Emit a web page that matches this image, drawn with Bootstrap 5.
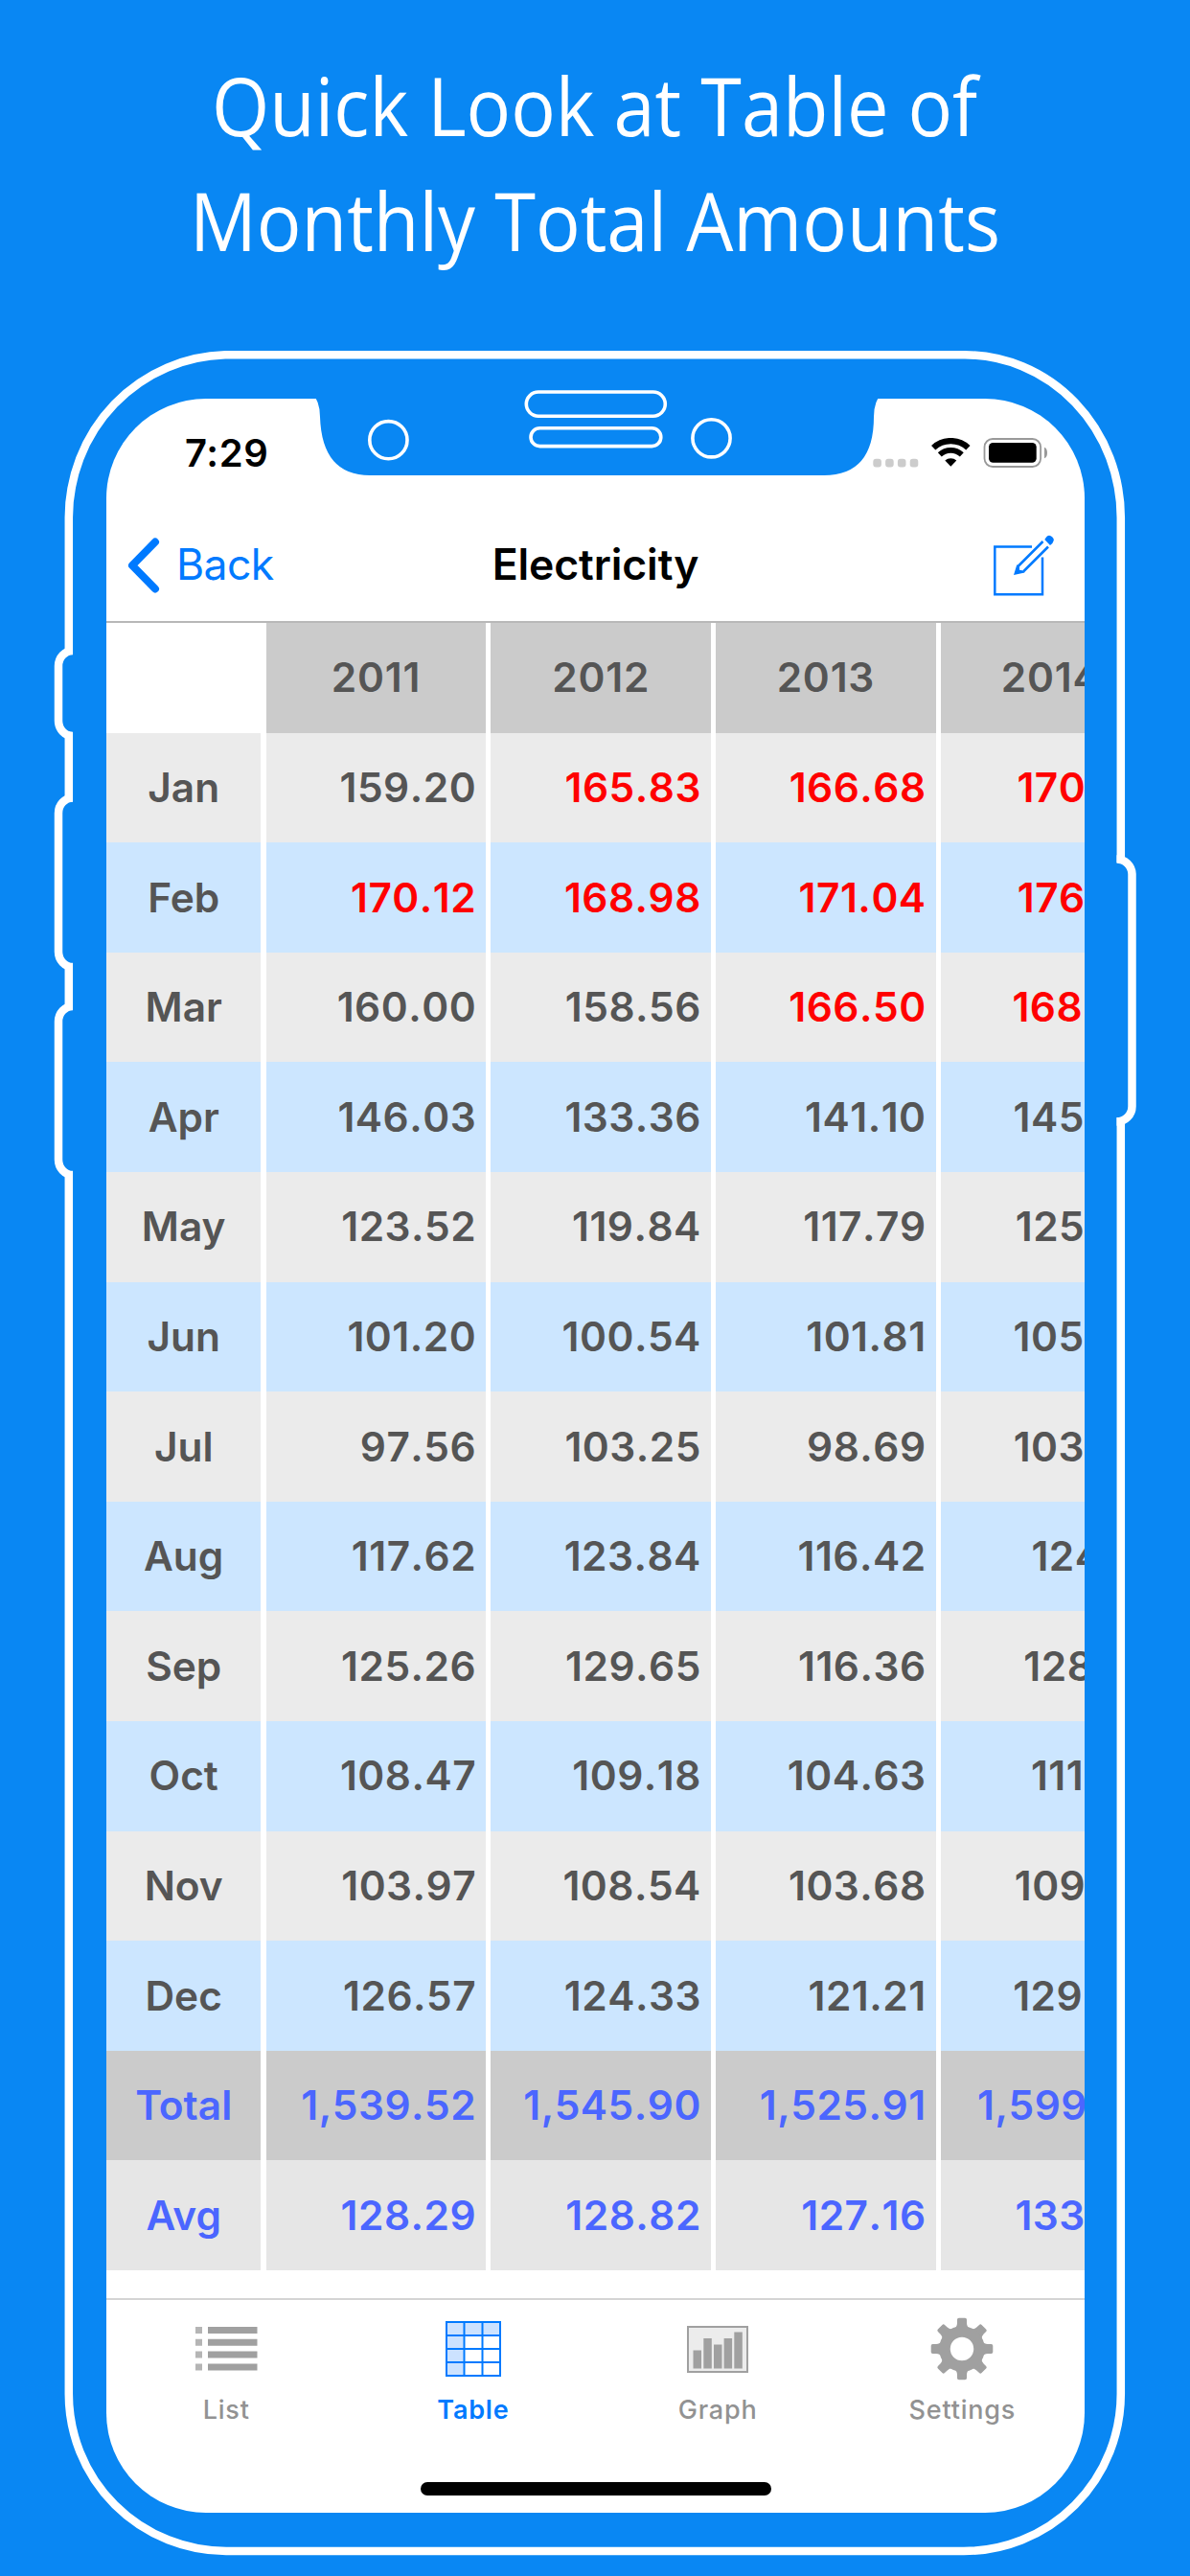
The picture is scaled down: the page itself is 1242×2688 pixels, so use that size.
<!DOCTYPE html>
<html lang="en">
<head>
    <meta charset="UTF-8">
    <meta name="viewport" content="width=device-width, initial-scale=1">
    <title>Electricity - Monthly Totals</title>
    <link href="https://cdn.jsdelivr.net/npm/bootstrap@5.3.3/dist/css/bootstrap.min.css" rel="stylesheet">
    <style>
        body { width: 1242px; height: 2688px; background: #0987f3; font-family: Inter, "Liberation Sans", sans-serif; overflow: hidden; }
        .headline { height: 416px; padding-top: 49px; font: 400 85px/120px "Open Sans", "Noto Sans", sans-serif; }
        .headline span { white-space: nowrap; transform-origin: center; }
        .phone-art { left: 0; top: 0; z-index: 2; pointer-events: none; }
        .screen { width: 1021px; height: 2206px; margin-left: 111px; border-radius: 104px; background: #fff; color: #000; }
        .status-bar { height: 120px; padding: 0 39px 0 82px; }
        .clock { font-size: 40px; font-weight: 600; line-height: 40px; padding-top: 37px; letter-spacing: .6px; }
        .status-icons { margin-top: 41px; }
        .nav-top { display: grid; grid-template-columns: 1fr auto 1fr; height: 114px; border-bottom: 2px solid #b8b8b8; padding: 0 31px 5px 21px; }
        .nav-top a { color: #007aff; font-size: 44.5px; line-height: 1; letter-spacing: -.6px; }
        .nav-top svg { overflow: visible; }
        .nav-title { font-size: 44.5px; font-weight: 600; line-height: 1; letter-spacing: -.1px; margin-left: 10px; }
        .amounts { display: grid; grid-template-columns: 161.4px repeat(4, 229.4px); grid-auto-rows: 114.6px; column-gap: 5.35px; height: 1748px; font-size: 42.4px; font-weight: 600; color: #555; }
        .amounts div { display: flex; align-items: center; justify-content: flex-end; padding-right: 10px; background: #ebebeb; white-space: nowrap; font-kerning: none; font-feature-settings: "calt" 0; letter-spacing: .5px; }
        .amounts .lbl { justify-content: center; padding: 0; font-kerning: auto; letter-spacing: 0; }
        .amounts .year { letter-spacing: .8px; }
        .amounts .even-month { background: #cce6ff; }
        .amounts .year, .amounts .total { background: #cbcbcb; }
        .amounts .avg { background: #e6e6e6; }
        .amounts .total, .amounts .avg { color: #4b66ff; }
        .amounts .corner { background: #fff; }
        .amounts .high { color: #f00; }
        .tabs { height: 192px; border-top: 2px solid #d4d4d4; }
        .tabs a { color: #929292; font-size: 27px; font-weight: 500; line-height: 32px; letter-spacing: .8px; }
        .tabs a:first-child { padding-right: 5px; }
        .tabs a.current { color: #007aff; font-weight: 600; }
        .tabs svg { height: 72px; margin: 15px 0 12px; }
        .home-bar { width: 366px; height: 14px; border-radius: 7px; background: #000; }
    </style>
</head>
<body class="position-relative">
<h1 class="headline m-0 text-white d-flex flex-column align-items-center">
    <span data-width="799">Quick Look at Table of</span>
    <span data-width="846">Monthly Total Amounts</span>
</h1>

<main class="screen overflow-hidden d-flex flex-column">
    <div class="status-bar d-flex justify-content-between align-items-start">
        <div class="clock">7:29</div>
        <svg class="status-icons" width="183" height="31" viewBox="0 0 183 31">
            <g fill="#ccc"><rect x="1.3" y="21.7" width="8.600" height="8.800" rx="3"/><rect x="14.1" y="21.7" width="8.600" height="8.800" rx="3"/><rect x="26.9" y="21.7" width="8.600" height="8.800" rx="3"/><rect x="39.7" y="21.7" width="8.600" height="8.800" rx="3"/></g>
            <path fill="none" stroke="#000" stroke-width="6.300" d="M64.200 10.200A26.600 26.600 0 0 1 100.400 10.200"/>
            <path fill="none" stroke="#000" stroke-width="5.700" d="M70.800 17.400A16.800 16.800 0 0 1 93.800 17.400"/>
            <path d="M82.300 29.700L76.300 23.500A9 9 0 0 1 88.300 23.500Z"/>
            <rect x="117.500" y="1" width="58.600" height="29" rx="8.500" fill="none" stroke="#999" stroke-width="1.800"/>
            <rect x="122" y="5" width="49.700" height="20.700" rx="4.500"/>
            <path d="M180 9.700Q183 11 183 15.500T180 21.300Z" fill="#999"/>
        </svg>
    </div>

    <nav class="nav-top align-items-center">
        <a href="#" class="d-flex align-items-center text-decoration-none">
            <svg width="36" height="60" viewBox="0 0 36 60" fill="none" stroke="#007aff" stroke-width="8" stroke-linecap="round" stroke-linejoin="round"><path d="M30 5.500L6 30L30 54.500"/></svg>
            <span class="ms-3">Back</span>
        </a>
        <span class="nav-title">Electricity</span>
        <a href="#" class="d-flex justify-content-end" aria-label="Edit">
            <svg width="66" height="66" viewBox="0 -1.500 66 66" fill="none" stroke="#007aff" stroke-width="2.500">
                <path d="M42 12H3.300V61.800H53V23"/>
                <path d="M53.500 6.500L27.500 32.500M59 12L33 38"/>
                <path fill="#007aff" stroke="none" d="M23 41.500L26.300 30.800L29 33V36.300L32 36.800L34.500 39Z"/>
                <path fill="#007aff" stroke="none" d="M55.300 4.500Q59 -2.500 63.200 1.800Q67.500 5.500 61 10.500Z"/>
            </svg>
        </a>
    </nav>

    <div class="amounts" id="amounts"></div>

    <nav class="tabs d-flex">
        <a href="#" class="d-flex flex-column align-items-center text-decoration-none w-25">
            <svg width="66" viewBox="0 0 66 72"><path fill="#b5b5b5" d="M1 13h7v7H1zM1 25.800h7v7H1zM1 38.600h7v7H1zM1 51.400h7v7H1z"/><path fill="#a0a0a0" d="M14 13h51.500v7H14zM14 25.800h51.500v7H14zM14 38.600h51.500v7H14zM14 51.400h51.500v7H14z"/></svg>
            <span>List</span>
        </a>
        <a href="#" class="current d-flex flex-column align-items-center text-decoration-none w-25">
            <svg width="60" viewBox="0 0 60 72"><path fill="#cce2ff" d="M2 8h56v14H20v42H2z"/><path fill="none" stroke="#007aff" stroke-width="2" d="M2 8h56v56H2zM20.500 8v56M39.500 8v56M2 22h56M2 36h56M2 50h56"/></svg>
            <span>Table</span>
        </a>
        <a href="#" class="d-flex flex-column align-items-center text-decoration-none w-25">
            <svg width="66" viewBox="0 0 66 72"><path fill="#ececec" stroke="#a0a0a0" stroke-width="2" d="M2 13h62v47H2z"/><path fill="#a0a0a0" d="M7.500 37.500h8.500v19H7.500zM18.300 25h8.500v31.500h-8.500zM29 31.500h8.500v25H29zM39.600 25h8.500v31.500h-8.500zM50.300 18.500h8.500v38h-8.500z"/></svg>
            <span>Graph</span>
        </a>
        <a href="#" class="d-flex flex-column align-items-center text-decoration-none w-25">
            <svg width="66" viewBox="-33 -36 66 72" fill="#a0a0a0"><g id="gear-teeth"></g><circle r="18" fill="none" stroke="#a0a0a0" stroke-width="11.500"/></svg>
            <span>Settings</span>
        </a>
    </nav>
    <div class="home-bar mx-auto"></div>
</main>

<!-- phone body: outline, side buttons, notch, speaker and cameras -->
<svg class="phone-art position-absolute" width="1242" height="2688" viewBox="0 0 1242 2688" fill="none">
    <path fill="#0987f3" d="M325 410Q334 418 334 435Q336 496 386 496H860Q912 496 912 435Q912 418 921 410Z"/>
    <g stroke="#fff" stroke-width="8.500">
        <path d="M71.800 683V540A168 170 0 0 1 235 370.300H1007A163 170 0 0 1 1169.800 540V900"/>
        <path d="M71.800 764V836.500M71.800 1005V1054M71.800 1222V2498A165 164 0 0 0 236 2662H1006A164 164 0 0 0 1169.800 2498V1166"/>
        <path d="M76 679A15 16 0 0 0 61 695V752A15 16 0 0 0 76 768M76 832.500A15 16 0 0 0 61 848.500V993A15 16 0 0 0 76 1009M76 1050A15 16 0 0 0 61 1066V1210A15 16 0 0 0 76 1226M1165.500 896.500A16 16 0 0 1 1181.500 912V1154.500A16 16 0 0 1 1165.500 1170.500"/>
    </g>
    <g stroke="#fff" stroke-width="3.600">
        <circle cx="405.400" cy="459.200" r="19.600"/>
        <circle cx="742.500" cy="457.300" r="19.600"/>
        <rect x="549.300" y="409" width="145" height="25.200" rx="12.600"/>
        <rect x="554" y="446.800" width="135.800" height="18.800" rx="9.400"/>
    </g>
</svg>

<script src="https://cdn.jsdelivr.net/npm/bootstrap@5.3.3/dist/js/bootstrap.bundle.min.js"></script>
<script>
// a trailing * marks amounts over the limit, shown in red
const rows = [
    ['', '2011', '2012', '2013', '2014'],
    ['Jan', '159.20', '165.83*', '166.68*', '170.52*'],
    ['Feb', '170.12*', '168.98*', '171.04*', '176.35*'],
    ['Mar', '160.00', '158.56', '166.50*', '168.40*'],
    ['Apr', '146.03', '133.36', '141.10', '145.20'],
    ['May', '123.52', '119.84', '117.79', '125.36'],
    ['Jun', '101.20', '100.54', '101.81', '105.42'],
    ['Jul', '97.56', '103.25', '98.69', '103.86'],
    ['Aug', '117.62', '123.84', '116.42', '124.11'],
    ['Sep', '125.26', '129.65', '116.36', '128.16'],
    ['Oct', '108.47', '109.18', '104.63', '111.80'],
    ['Nov', '103.97', '108.54', '103.68', '109.25'],
    ['Dec', '126.57', '124.33', '121.21', '129.04'],
    ['Total', '1,539.52', '1,545.90', '1,525.91', '1,599.37'],
    ['Avg', '128.29', '128.82', '127.16', '133.28']
];
const grid = document.getElementById('amounts');
rows.forEach((row, r) => row.forEach((text, c) => {
    const cell = document.createElement('div');
    if (r === 0) cell.classList.add(c ? 'year' : 'corner', 'lbl');
    else if (r === 13) cell.classList.add('total');
    else if (r === 14) cell.classList.add('avg');
    else if (r % 2 === 0) cell.classList.add('even-month');
    if (c === 0) cell.classList.add('lbl');
    if (text.endsWith('*')) cell.classList.add('high');
    cell.textContent = text.replace('*', '');
    grid.appendChild(cell);
}));

// squeeze the headline to its set width
document.querySelectorAll('.headline span').forEach(el => {
    el.style.transform = 'scaleX(' + el.dataset.width / el.offsetWidth + ')';
});

document.getElementById('gear-teeth').innerHTML = [0, 45, 90, 135, 180, 225, 270, 315].map(a =>
    '<path transform="rotate(' + a + ')" d="M-9 -20Q-5 -23 -5 -27V-30.500Q-5 -32.300 -3.200 -32.300H3.200Q5 -32.300 5 -30.500V-27Q5 -23 9 -20Z"/>').join('');
</script>
</body>
</html>
